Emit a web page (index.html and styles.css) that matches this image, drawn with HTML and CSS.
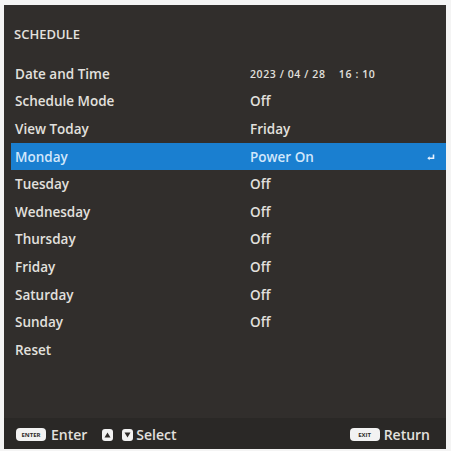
FILE: index.html
```html
<!DOCTYPE html>
<html>
<head>
<meta charset="utf-8">
<link rel="stylesheet" href="styles.css">
</head>
<body>
<div class="panel">
  <div class="title">SCHEDULE</div>
  <div class="list">
    <div class="row"><span class="label">Date and Time</span><span class="value small">2023 / 04 / 28&nbsp;&nbsp;&nbsp;&nbsp;16 : 10</span></div>
    <div class="row"><span class="label">Schedule Mode</span><span class="value">Off</span></div>
    <div class="row"><span class="label">View Today</span><span class="value">Friday</span></div>
    <div class="row active"><span class="label">Monday</span><span class="value">Power On</span>
      <svg class="enter-ico" width="8" height="7" viewBox="0 0 8 7"><path d="M6.5 0.5 V4.2 H1.8" fill="none" stroke="#e8f2ff" stroke-width="1.6"/><path d="M0.3 4.2 L2.6 2.2 V6.2 Z" fill="#e8f2ff"/></svg>
    </div>
    <div class="row"><span class="label">Tuesday</span><span class="value">Off</span></div>
    <div class="row"><span class="label">Wednesday</span><span class="value">Off</span></div>
    <div class="row"><span class="label">Thursday</span><span class="value">Off</span></div>
    <div class="row"><span class="label">Friday</span><span class="value">Off</span></div>
    <div class="row"><span class="label">Saturday</span><span class="value">Off</span></div>
    <div class="row"><span class="label">Sunday</span><span class="value">Off</span></div>
    <div class="row"><span class="label">Reset</span></div>
  </div>
  <div class="footer">
    <div class="hint"><span class="key wide">ENTER</span><span>Enter</span></div>
    <div class="hint sel">
      <span class="key sq"><svg width="7" height="6" viewBox="0 0 7 6"><path d="M3.5 0.5 L6.5 5.5 H0.5 Z" fill="#2e2b29"/></svg></span>
      <span class="key sq down"><svg width="7" height="6" viewBox="0 0 7 6"><path d="M0.5 0.5 H6.5 L3.5 5.5 Z" fill="#2e2b29"/></svg></span>
      <span>Select</span>
    </div>
    <div class="hint ret"><span class="key wide exit">EXIT</span><span>Return</span></div>
  </div>
</div>
</body>
</html>
```
FILE: styles.css
```css
html, body {
  margin: 0;
  padding: 0;
  background: #f4f4f4;
}
body {
  width: 451px;
  height: 451px;
  overflow: hidden;
  font-family: "Open Sans", "DejaVu Sans", sans-serif;
}
.panel {
  margin: 5px 5px 0 4px;
  height: 444px;
  background: #312e2c;
  display: flex;
  flex-direction: column;
  color: #e2e0de;
}
.title {
  height: 55px;
  box-sizing: border-box;
  padding: 21px 0 0 10px;
  font-size: 13px;
  line-height: 16px;
  font-weight: 600;
}
.list {
  display: flex;
  flex-direction: column;
  margin-left: 7px;
}
.row {
  height: 27.6px;
  display: flex;
  align-items: center;
  padding-left: 4px;
  font-size: 13.5px;
  font-weight: 600;
  position: relative;
}
.label {
  width: 235px;
}
.value.small {
  font-size: 10.5px;
  letter-spacing: 0.6px;
}
.row.active {
  background: #1a7fd0;
  color: #d2e7fb;
}
.enter-ico {
  position: absolute;
  right: 11px;
  top: 11px;
}
.footer {
  margin-top: auto;
  height: 31px;
  background: #2a2826;
  display: flex;
  align-items: center;
  padding: 2px 16px 0 12px;
  box-sizing: border-box;
  font-size: 14px;
  font-weight: 600;
}
.hint {
  display: flex;
  align-items: center;
  gap: 5px;
}
.hint.sel {
  margin-left: 15px;
  gap: 0;
}
.hint.sel .down {
  margin-left: 9px;
  margin-right: 3px;
}
.hint.ret {
  margin-left: auto;
  gap: 4px;
}
.key {
  background: #f2f2f2;
  color: #2e2b29;
  border-radius: 3px;
  display: inline-flex;
  align-items: center;
  justify-content: center;
}
.key.wide {
  width: 30px;
  height: 13px;
  font-size: 6px;
  font-weight: 700;
  border-radius: 4px;
}
.key.sq {
  width: 11px;
  height: 12px;
}
```
